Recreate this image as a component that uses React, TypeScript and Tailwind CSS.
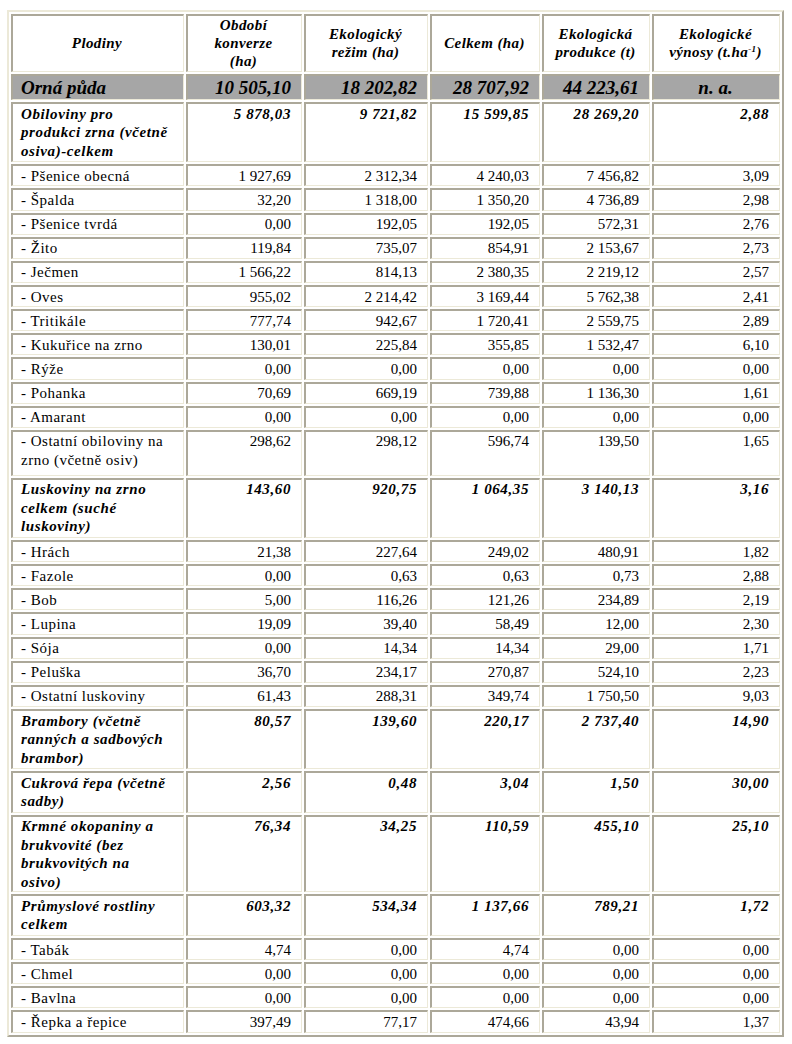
type Row = {
  name: string[]
  values: string[]
  bold?: boolean
  h?: string
  tight?: boolean
}

const rows: Row[] = [
  { name: ['Obiloviny pro', 'produkci zrna (včetně', 'osiva)-celkem'], values: ['5 878,03', '9 721,82', '15 599,85', '28 269,20', '2,88'], bold: true },
  { name: ['- Pšenice obecná'], values: ['1 927,69', '2 312,34', '4 240,03', '7 456,82', '3,09'] },
  { name: ['- Špalda'], values: ['32,20', '1 318,00', '1 350,20', '4 736,89', '2,98'] },
  { name: ['- Pšenice tvrdá'], values: ['0,00', '192,05', '192,05', '572,31', '2,76'] },
  { name: ['- Žito'], values: ['119,84', '735,07', '854,91', '2 153,67', '2,73'] },
  { name: ['- Ječmen'], values: ['1 566,22', '814,13', '2 380,35', '2 219,12', '2,57'] },
  { name: ['- Oves'], values: ['955,02', '2 214,42', '3 169,44', '5 762,38', '2,41'] },
  { name: ['- Tritikále'], values: ['777,74', '942,67', '1 720,41', '2 559,75', '2,89'] },
  { name: ['- Kukuřice na zrno'], values: ['130,01', '225,84', '355,85', '1 532,47', '6,10'] },
  { name: ['- Rýže'], values: ['0,00', '0,00', '0,00', '0,00', '0,00'] },
  { name: ['- Pohanka'], values: ['70,69', '669,19', '739,88', '1 136,30', '1,61'] },
  { name: ['- Amarant'], values: ['0,00', '0,00', '0,00', '0,00', '0,00'] },
  { name: ['- Ostatní obiloviny na', 'zrno (včetně osiv)'], values: ['298,62', '298,12', '596,74', '139,50', '1,65'], h: 'h-[46px]' },
  { name: ['Luskoviny na zrno', 'celkem (suché', 'luskoviny)'], values: ['143,60', '920,75', '1 064,35', '3 140,13', '3,16'], bold: true },
  { name: ['- Hrách'], values: ['21,38', '227,64', '249,02', '480,91', '1,82'] },
  { name: ['- Fazole'], values: ['0,00', '0,63', '0,63', '0,73', '2,88'] },
  { name: ['- Bob'], values: ['5,00', '116,26', '121,26', '234,89', '2,19'] },
  { name: ['- Lupina'], values: ['19,09', '39,40', '58,49', '12,00', '2,30'] },
  { name: ['- Sója'], values: ['0,00', '14,34', '14,34', '29,00', '1,71'] },
  { name: ['- Peluška'], values: ['36,70', '234,17', '270,87', '524,10', '2,23'] },
  { name: ['- Ostatní luskoviny'], values: ['61,43', '288,31', '349,74', '1 750,50', '9,03'] },
  { name: ['Brambory (včetně', 'ranných a sadbových', 'brambor)'], values: ['80,57', '139,60', '220,17', '2 737,40', '14,90'], bold: true },
  { name: ['Cukrová řepa (včetně', 'sadby)'], values: ['2,56', '0,48', '3,04', '1,50', '30,00'], bold: true },
  { name: ['Krmné okopaniny a', 'brukvovité (bez', 'brukvovitých na', 'osivo)'], values: ['76,34', '34,25', '110,59', '455,10', '25,10'], bold: true, tight: true },
  { name: ['Průmyslové rostliny', 'celkem'], values: ['603,32', '534,34', '1 137,66', '789,21', '1,72'], bold: true },
  { name: ['- Tabák'], values: ['4,74', '0,00', '4,74', '0,00', '0,00'] },
  { name: ['- Chmel'], values: ['0,00', '0,00', '0,00', '0,00', '0,00'] },
  { name: ['- Bavlna'], values: ['0,00', '0,00', '0,00', '0,00', '0,00'] },
  { name: ['- Řepka a řepice'], values: ['397,49', '77,17', '474,66', '43,94', '1,37'] },
]

// inset cell edges, like the old table border look
const cell =
  'border-t-2 border-l-2 border-r border-b border-t-[#aca899] border-l-[#aca899] border-r-[#ece9d8] border-b-[#ece9d8] pl-[8px] pr-[10px] whitespace-nowrap'

const nbsp = (s: string) => s.replace(/ /g, '\u00a0')

function Lines({ lines }: { lines: string[] }) {
  return (
    <>
      {lines.map((l, i) => (
        <span key={i}>
          {i > 0 && <br />}
          {l}
        </span>
      ))}
    </>
  )
}

export default function App() {
  return (
    <div className="min-h-screen bg-white pl-[7px] pt-[10px] text-black font-serif">
      <table className="font-['Liberation_Serif'] table-fixed w-[777px] border-separate border-spacing-[2px] border-2 border-t-[#ece9d8] border-l-[#ece9d8] border-r-[#aca899] border-b-[#aca899] bg-white">
        <thead>
          <tr className="text-[15px] leading-[18.2px] font-bold italic tracking-[0.4px]">
            <th className={`${cell} w-[173px] text-center align-middle`}>Plodiny</th>
            <th className={`${cell} w-[116px] text-center align-middle`}>
              <Lines lines={['Období', 'konverze', '(ha)']} />
            </th>
            <th className={`${cell} w-[124px] text-center align-middle`}>
              <Lines lines={['Ekologický', 'režim (ha)']} />
            </th>
            <th className={`${cell} w-[110px] text-center align-middle`}>Celkem (ha)</th>
            <th className={`${cell} w-[108px] text-center align-middle`}>
              <Lines lines={['Ekologická', 'produkce (t)']} />
            </th>
            <th className={`${cell} w-[128px] text-center align-middle`}>
              Ekologické
              <br />
              výnosy (t.ha<span className="text-[9px] align-[5px] leading-none">-1</span>)
            </th>
          </tr>
        </thead>
        <tbody>
          <tr className="bg-[#a6a6a6] text-[19px] leading-[23.5px] font-bold italic">
            <td className={`${cell} text-left align-middle`}>Orná půda</td>
            <td className={`${cell} text-right align-middle`}>{nbsp('10 505,10')}</td>
            <td className={`${cell} text-right align-middle`}>{nbsp('18 202,82')}</td>
            <td className={`${cell} text-right align-middle`}>{nbsp('28 707,92')}</td>
            <td className={`${cell} text-right align-middle`}>{nbsp('44 223,61')}</td>
            <td className={`${cell} text-center align-middle`}>n. a.</td>
          </tr>
          {rows.map((r, i) => {
            const pad = r.bold && !r.tight ? 'pt-[0.65px] pb-[1px]' : 'pt-[0.65px]'
            return (
              <tr
                key={i}
                className={`text-[15px] leading-[18.5px] ${r.bold ? 'font-bold italic tracking-[0.6px]' : ''}`}
              >
                <td
                  className={`${cell} text-left align-top ${r.h ?? ''} ${pad} ${
                    r.bold ? '' : 'tracking-[0.5px]'
                  }`}
                >
                  <Lines lines={r.name} />
                </td>
                {r.values.map((v, j) => (
                  <td key={j} className={`${cell} text-right align-top ${pad}`}>
                    {nbsp(v)}
                  </td>
                ))}
              </tr>
            )
          })}
        </tbody>
      </table>
    </div>
  )
}
